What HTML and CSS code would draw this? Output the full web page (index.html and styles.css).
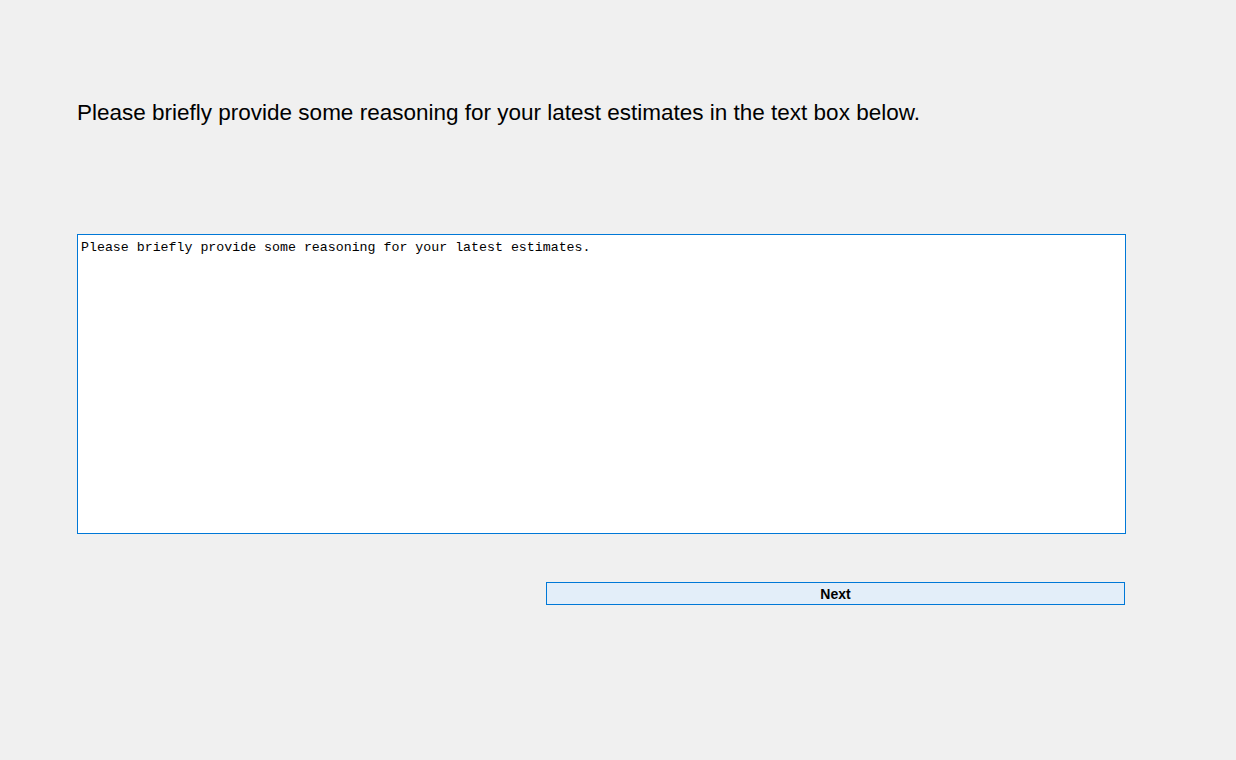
FILE: index.html
```html
<!DOCTYPE html>
<html>
<head>
<meta charset="utf-8">
<link rel="stylesheet" href="styles.css">
</head>
<body>
<div class="page">
  <p class="prompt">Please briefly provide some reasoning for your latest estimates in the text box below.</p>
  <textarea class="reason" placeholder="Please briefly provide some reasoning for your latest estimates."></textarea>
  <div class="actions">
    <button class="next">Next</button>
  </div>
</div>
</body>
</html>
```
FILE: styles.css
```css
html, body {
  margin: 0;
  padding: 0;
  background: #f0f0f0;
  height: 100%;
}
.page {
  padding: 101px 0 0 77px;
  width: 1049px;
  font-family: "Liberation Sans", Arial, sans-serif;
}
.prompt {
  margin: 0;
  font-size: 22.5px;
  line-height: 24px;
  color: #000;
}
.reason {
  display: block;
  box-sizing: border-box;
  margin-top: 109px;
  width: 1049px;
  height: 300px;
  border: 1px solid #0078d7;
  background: #fff;
  padding: 6px 3px 5px 3px;
  font-family: "Liberation Mono", "Courier New", monospace;
  font-size: 13.28px;
  line-height: 14px;
  resize: none;
  outline: none;
}
.reason::placeholder {
  color: #000;
  opacity: 1;
}
.actions {
  display: flex;
  justify-content: flex-end;
  margin-top: 48px;
}
.next {
  box-sizing: border-box;
  width: 579px;
  height: 23px;
  margin-right: 1px;
  border: 1px solid #0078d7;
  background: #e3eef9;
  font-family: "Liberation Sans", Arial, sans-serif;
  font-weight: bold;
  font-size: 14px;
  color: #000;
  padding: 0;
}
```
